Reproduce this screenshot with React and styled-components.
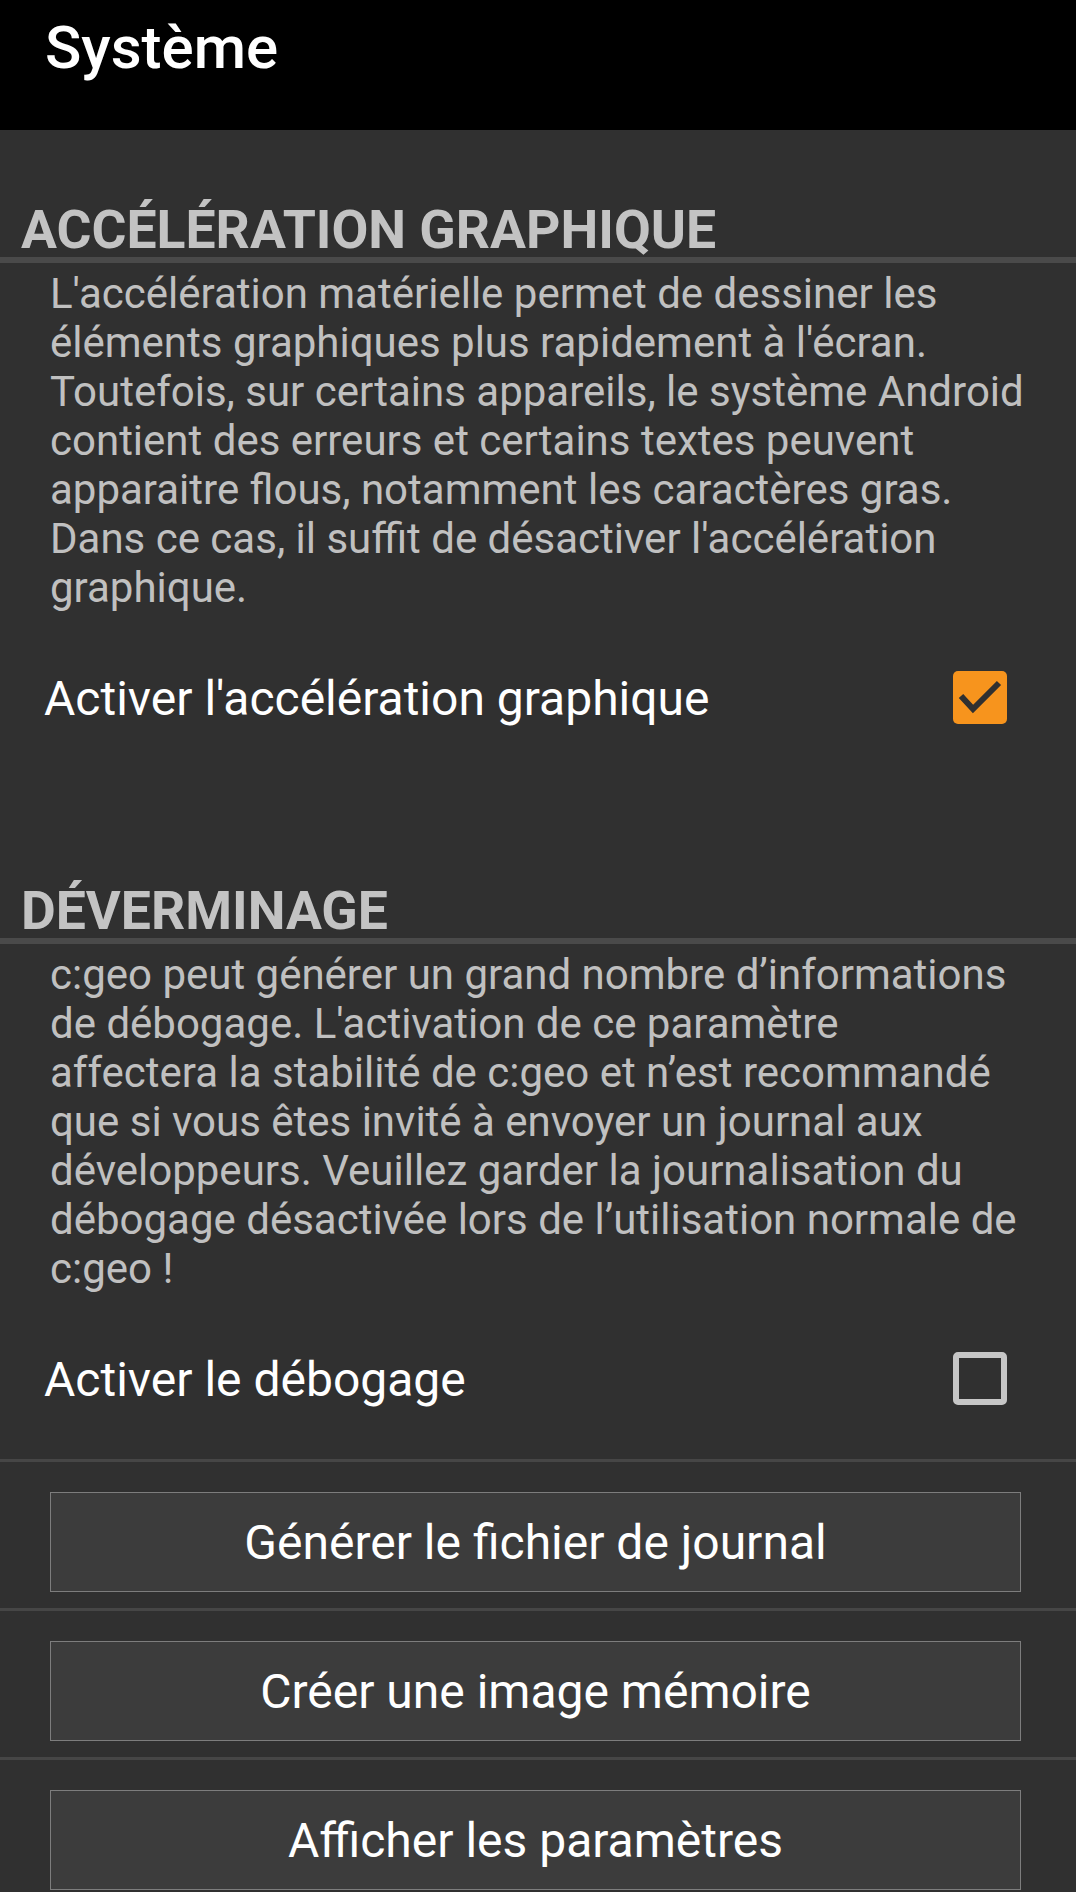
import React from 'react';
import styled, { createGlobalStyle } from 'styled-components';

const GlobalStyle = createGlobalStyle`
  html, body {
    margin: 0;
    padding: 0;
    background: #303030;
  }
  body {
    font-family: Roboto, "Noto Sans", sans-serif;
    -webkit-font-smoothing: antialiased;
  }
`;

const Screen = styled.div`
  width: 1076px;
  min-height: 1892px;
  background: #303030;
  display: flex;
  flex-direction: column;
`;

const AppBar = styled.header`
  height: 130px;
  background: #000;
  box-sizing: border-box;
  padding: 18px 0 0 45px;
`;

const Title = styled.h1`
  margin: 0;
  font-size: 60px;
  line-height: 60px;
  font-weight: 500;
  color: #fff;
`;

const CategoryTitle = styled.h2`
  margin: ${(p) => (p.$first ? '72px' : '105px')} 0 0;
  padding-left: 21px;
  font-size: 53.5px;
  line-height: 55px;
  font-weight: 700;
  color: #c3c3c3;
`;

const CategoryRule = styled.div`
  height: 6px;
  background: #4a4a4a;
`;

const Summary = styled.p`
  margin: 6px 0 0;
  padding-left: 50px;
  font-size: 42px;
  line-height: 49px;
  color: #c0c0c0;
  white-space: pre-line;
`;

const CheckRow = styled.label`
  height: 166px;
  box-sizing: border-box;
  padding: 4px 69px 0 44px;
  display: flex;
  align-items: center;
  justify-content: space-between;
`;

const CheckLabel = styled.span`
  padding-top: 4px;
  font-size: 48px;
  line-height: 56px;
  color: #fff;
`;

const Box = styled.span`
  width: 54px;
  height: 53px;
  box-sizing: border-box;
  border-radius: 5px;
  display: flex;
  align-items: center;
  justify-content: center;
  background: ${(p) => (p.$checked ? '#f7941d' : 'transparent')};
  border: ${(p) => (p.$checked ? 'none' : '6px solid #c6c6c6')};
`;

const ItemRule = styled.div`
  height: 3px;
  background: #464646;
`;

const ActionButton = styled.button`
  margin: 30px 55px 16px 50px;
  height: 100px;
  box-sizing: border-box;
  border: 1px solid #7d7d7d;
  border-radius: 0;
  background: #3c3c3c;
  color: #fff;
  font-family: Roboto, "Noto Sans", sans-serif;
  font-size: 48px;
  padding: 0;
`;

const CheckBox = ({ checked }) => (
  <Box $checked={checked}>
    {checked && (
      <svg width="54" height="53" viewBox="0 0 54 53">
        <path d="M8 25 L20 38 L46 12" fill="none" stroke="#303030" strokeWidth="6" />
      </svg>
    )}
  </Box>
);

const accelText = `L'accélération matérielle permet de dessiner les
éléments graphiques plus rapidement à l'écran.
Toutefois, sur certains appareils, le système Android
contient des erreurs et certains textes peuvent
apparaitre flous, notamment les caractères gras.
Dans ce cas, il suffit de désactiver l'accélération
graphique.`;

const debugText = `c:geo peut générer un grand nombre d’informations
de débogage. L'activation de ce paramètre
affectera la stabilité de c:geo et n’est recommandé
que si vous êtes invité à envoyer un journal aux
développeurs. Veuillez garder la journalisation du
débogage désactivée lors de l’utilisation normale de
c:geo !`;

const actions = ['Générer le fichier de journal', 'Créer une image mémoire', 'Afficher les paramètres'];

export default function App() {
  return (
    <>
      <GlobalStyle />
      <Screen>
        <AppBar>
          <Title>Système</Title>
        </AppBar>

        <CategoryTitle $first>ACCÉLÉRATION GRAPHIQUE</CategoryTitle>
        <CategoryRule />
        <Summary>{accelText}</Summary>
        <CheckRow>
          <CheckLabel>Activer l'accélération graphique</CheckLabel>
          <CheckBox checked />
        </CheckRow>

        <CategoryTitle>DÉVERMINAGE</CategoryTitle>
        <CategoryRule />
        <Summary>{debugText}</Summary>
        <CheckRow>
          <CheckLabel>Activer le débogage</CheckLabel>
          <CheckBox />
        </CheckRow>

        {actions.map((a) => (
          <React.Fragment key={a}>
            <ItemRule />
            <ActionButton>{a}</ActionButton>
          </React.Fragment>
        ))}
      </Screen>
    </>
  );
}
